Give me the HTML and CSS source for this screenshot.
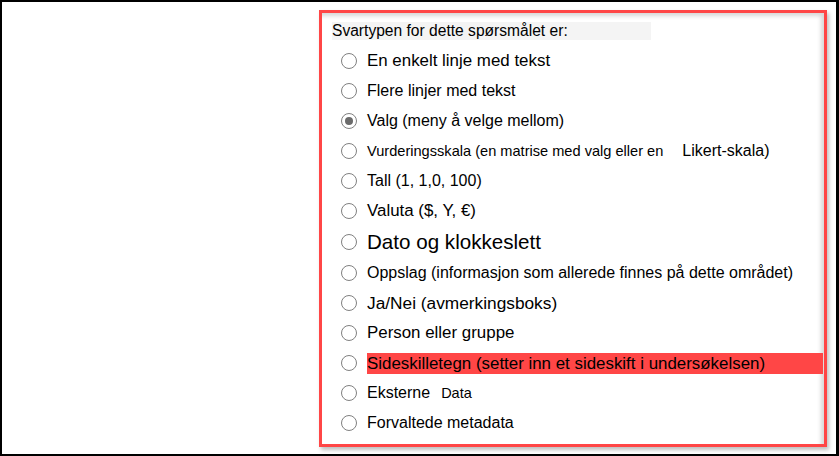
FILE: index.html
```html
<!DOCTYPE html>
<html lang="nb">
<head>
<meta charset="utf-8">
<title>Svartype</title>
<link rel="stylesheet" href="styles.css">
</head>
<body>
<div class="frame">
  <div class="panel">
    <div class="header">Svartypen for dette spørsmålet er:</div>
    <ul class="options">
      <li class="opt"><span class="radio"></span><span class="label wide">En enkelt linje med tekst</span></li>
      <li class="opt"><span class="radio"></span><span class="label">Flere linjer med tekst</span></li>
      <li class="opt"><span class="radio checked"></span><span class="label">Valg (meny å velge mellom)</span></li>
      <li class="opt"><span class="radio"></span><span class="label small">Vurderingsskala (en matrise med valg eller en</span><span class="label likert">Likert-skala)</span></li>
      <li class="opt"><span class="radio"></span><span class="label">Tall (1, 1,0, 100)</span></li>
      <li class="opt"><span class="radio"></span><span class="label wide">Valuta ($, Y, €)</span></li>
      <li class="opt big"><span class="radio"></span><span class="label large">Dato og klokkeslett</span></li>
      <li class="opt"><span class="radio"></span><span class="label">Oppslag (informasjon som allerede finnes på dette området)</span></li>
      <li class="opt"><span class="radio"></span><span class="label wider">Ja/Nei (avmerkingsboks)</span></li>
      <li class="opt"><span class="radio"></span><span class="label wide">Person eller gruppe</span></li>
      <li class="opt"><span class="radio"></span><span class="label wide highlight">Sideskilletegn (setter inn et sideskift i undersøkelsen)</span></li>
      <li class="opt"><span class="radio"></span><span class="label">Eksterne</span><span class="label data">Data</span></li>
      <li class="opt"><span class="radio"></span><span class="label">Forvaltede metadata</span></li>
    </ul>
  </div>
</div>
</body>
</html>
```

FILE: styles.css
```css
html, body {
  margin: 0;
  padding: 0;
  background: #ffffff;
}

body {
  font-family: "Liberation Sans", Arial, sans-serif;
  color: #000000;
}

.frame {
  width: 839px;
  height: 456px;
  box-sizing: border-box;
  border: 2px solid #000000;
  border-right-width: 3px;
  background: #ffffff;
  padding-top: 8px;
  padding-left: 317px;
}

.panel {
  width: 508px;
  height: 437px;
  box-sizing: border-box;
  border: 3px solid #ff4646;
  background: #ffffff;
  box-shadow: 2px 3px 4px rgba(0, 0, 0, 0.25), inset -4px 4px 4px -1px rgba(0, 0, 0, 0.16);
}

.header {
  margin: 9px 0 0 10px;
  width: 319px;
  height: 18px;
  line-height: 18px;
  font-size: 15.6px;
  background: #f4f4f4;
  white-space: nowrap;
}

.options {
  list-style: none;
  margin: 6px 0 0 0;
  padding: 0 0 0 19px;
}

.opt {
  height: 30px;
  display: flex;
  align-items: center;
  white-space: nowrap;
}

.opt.big {
  height: 32px;
}

.radio {
  flex: none;
  width: 16px;
  height: 16px;
  box-sizing: border-box;
  border: 1.6px solid #808080;
  border-radius: 50%;
  background: #ffffff;
  margin-right: 10px;
  display: flex;
  align-items: center;
  justify-content: center;
}

.radio.checked::after {
  content: "";
  width: 8.5px;
  height: 8.5px;
  border-radius: 50%;
  background: #6b6b6b;
}

.label {
  font-size: 16px;
}

.label.wide {
  font-size: 16.9px;
}

.label.wider {
  font-size: 17.3px;
}

.label.small {
  font-size: 14.6px;
}

.label.likert {
  margin-left: 19px;
}

.label.large {
  font-size: 20.6px;
}

.label.data {
  font-size: 14.5px;
  margin-left: 11px;
}

.label.highlight {
  flex: 1;
  margin-right: 1px;
  height: 21px;
  line-height: 21px;
  background: #ff4646;
}
```
